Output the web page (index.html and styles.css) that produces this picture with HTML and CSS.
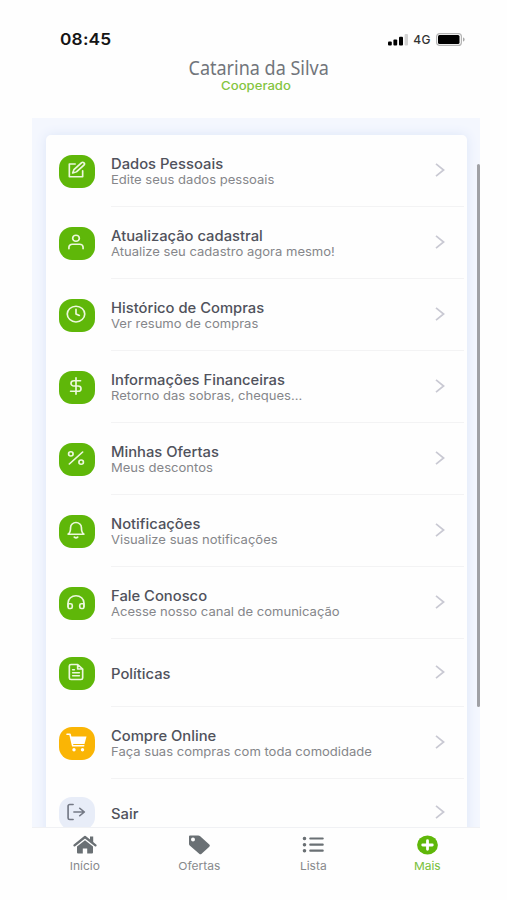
FILE: index.html
```html
<!DOCTYPE html>
<html lang="pt-BR">
<head>
<meta charset="utf-8">
<title>Mais</title>
<link rel="stylesheet" href="styles.css">
</head>
<body>
<div class="phone">
  <header class="status">
    <span class="time">08:45</span>
    <div class="signals">
      <svg class="bars" width="20" height="12" viewBox="0 0 20 12"><rect x="0" y="7.5" width="3.8" height="4" rx="1"/><rect x="5.4" y="5.5" width="3.8" height="6" rx="1"/><rect x="11" y="2.8" width="4" height="8.700" rx="1"/><rect x="16.6" y="0" width="3.4" height="11.5" rx="1" fill="#d2d2d2"/></svg>
      <span class="net">4G</span>
      <svg class="battery" width="29" height="13" viewBox="0 0 29 13"><rect x=".6" y=".6" width="24.8" height="11.8" rx="3" fill="#fff" stroke="#b5b5b5" stroke-width="1.2"/><rect x="2" y="2" width="21.5" height="9" rx="1.5"/><path d="M27 4.5c2.2.8 2.2 3.2 0 4z" fill="#aaa"/></svg>
    </div>
  </header>
  <div class="profile">
    <h1 class="name">Catarina da Silva</h1>
    <p class="role">Cooperado</p>
  </div>
  <main class="content">
    <div class="thumb"></div>
    <ul class="card">
      <li class="row"><span class="badge"><svg class="glyph" viewBox="0 0 24 24" preserveAspectRatio="none"><path d="M11 4H4v17h16v-8"/><path d="M18.500 2.500a2.100 2.100 0 0 1 3 3L12.500 14.500l-4.500 1.500 1.500-4.500z"/></svg></span>
        <div class="body"><div class="text"><b class="title">Dados Pessoais</b><span class="sub">Edite seus dados pessoais</span></div><svg class="chev" viewBox="0 0 10 14"><path d="M1 .8 8.600 7 1 13.200"/></svg></div></li>
      <li class="row"><span class="badge"><svg class="glyph" viewBox="0 0 24 24" preserveAspectRatio="none"><circle cx="12" cy="7" r="4"/><path d="M3.500 21v-2a4 4 0 0 1 4-4h9a4 4 0 0 1 4 4v2"/></svg></span>
        <div class="body"><div class="text"><b class="title">Atualização cadastral</b><span class="sub">Atualize seu cadastro agora mesmo!</span></div><svg class="chev" viewBox="0 0 10 14"><path d="M1 .8 8.600 7 1 13.200"/></svg></div></li>
      <li class="row"><span class="badge"><svg class="glyph" viewBox="0 0 24 24" preserveAspectRatio="none"><circle cx="12" cy="12" r="10.500"/><path d="M12 5.500V12l4 2"/></svg></span>
        <div class="body"><div class="text"><b class="title">Histórico de Compras</b><span class="sub">Ver resumo de compras</span></div><svg class="chev" viewBox="0 0 10 14"><path d="M1 .8 8.600 7 1 13.200"/></svg></div></li>
      <li class="row"><span class="badge"><svg class="glyph" viewBox="0 0 24 24" preserveAspectRatio="none"><path d="M12 1v22M17.500 5H9.500a3.500 3.500 0 0 0 0 7h5a3.500 3.500 0 0 1 0 7H5.500"/></svg></span>
        <div class="body"><div class="text"><b class="title">Informações Financeiras</b><span class="sub">Retorno das sobras, cheques...</span></div><svg class="chev" viewBox="0 0 10 14"><path d="M1 .8 8.600 7 1 13.200"/></svg></div></li>
      <li class="row"><span class="badge"><svg class="glyph" viewBox="0 0 24 24" preserveAspectRatio="none"><path d="M20 4 4 20"/><circle cx="5.800" cy="6.500" r="2.700"/><circle cx="18.200" cy="17.500" r="2.700"/></svg></span>
        <div class="body"><div class="text"><b class="title">Minhas Ofertas</b><span class="sub">Meus descontos</span></div><svg class="chev" viewBox="0 0 10 14"><path d="M1 .8 8.600 7 1 13.200"/></svg></div></li>
      <li class="row"><span class="badge"><svg class="glyph" viewBox="0 0 24 24" preserveAspectRatio="none"><path d="M18.500 8.500a6.500 6.500 0 0 0-13 0c0 7-3 9-3 9h19s-3-2-3-9M14 21.500a2.500 1.800 0 0 1-4 0"/></svg></span>
        <div class="body"><div class="text"><b class="title">Notificações</b><span class="sub">Visualize suas notificações</span></div><svg class="chev" viewBox="0 0 10 14"><path d="M1 .8 8.600 7 1 13.200"/></svg></div></li>
      <li class="row"><span class="badge"><svg class="glyph" viewBox="0 0 24 24" preserveAspectRatio="none"><path d="M2.500 18v-5a9.500 9.500 0 0 1 19 0v5"/><path d="M21.500 18.500a2.300 2.300 0 0 1-2.300 2.300h-.7a2 2 0 0 1-2-2v-2.500a2 2 0 0 1 2-2h3zM2.500 18.500a2.300 2.300 0 0 0 2.300 2.300h.7a2 2 0 0 0 2-2v-2.500a2 2 0 0 0-2-2h-3z"/></svg></span>
        <div class="body"><div class="text"><b class="title">Fale Conosco</b><span class="sub">Acesse nosso canal de comunicação</span></div><svg class="chev" viewBox="0 0 10 14"><path d="M1 .8 8.600 7 1 13.200"/></svg></div></li>
      <li class="row short"><span class="badge"><svg class="glyph" viewBox="0 0 24 24" preserveAspectRatio="none"><path d="M14 2H6a2 2 0 0 0-2 2v16a2 2 0 0 0 2 2h12a2 2 0 0 0 2-2V8zM14 2v6h6M16 13H8M16 17H8M10 9H8"/></svg></span>
        <div class="body"><div class="text"><b class="title">Políticas</b></div><svg class="chev" viewBox="0 0 10 14"><path d="M1 .8 8.600 7 1 13.200"/></svg></div></li>
      <li class="row"><span class="badge shop"><svg class="cart" width="21" height="19" viewBox="0 0 21 19"><path d="M1 1.200h3l2.700 11.600h11" fill="none" stroke="#fff" stroke-width="1.600" stroke-linecap="round" stroke-linejoin="round"/><path d="M4.500 3.500h16l-2 7.500H6.300z"/><circle cx="8" cy="16.800" r="1.700"/><circle cx="16.500" cy="16.800" r="1.700"/></svg></span>
        <div class="body"><div class="text"><b class="title">Compre Online</b><span class="sub">Faça suas compras com toda comodidade</span></div><svg class="chev" viewBox="0 0 10 14"><path d="M1 .8 8.600 7 1 13.200"/></svg></div></li>
      <li class="row short"><span class="badge exit"><svg class="glyph" viewBox="0 0 24 24" preserveAspectRatio="none"><path d="M8.500 2H4.500a2 2 0 0 0-2 2v16a2 2 0 0 0 2 2h4M16.500 17l5.500-5-5.500-5M21.500 12H9.500"/></svg></span>
        <div class="body"><div class="text"><b class="title">Sair</b></div><svg class="chev" viewBox="0 0 10 14"><path d="M1 .8 8.600 7 1 13.200"/></svg></div></li>
    </ul>
  </main>
  <nav class="tabs">
    <a class="tab"><svg width="24" height="20" viewBox="0 0 24 20"><path d="M1.500 10.300 12 2l10.500 8.300" fill="none" stroke="currentColor" stroke-width="2.300" stroke-linecap="round" stroke-linejoin="round"/><path d="M17 1.500h3.200v6.500L17 5.500zM12 5.300l8 6.300v6q0 1-1 1h-4.800v-5.100H9.800v5.100H5q-1 0-1-1v-6z"/></svg><span>Início</span></a>
    <a class="tab"><svg width="24" height="20" viewBox="0 0 24 20"><path fill-rule="evenodd" d="M3 .5h8.200q1 0 1.700.6l9.400 8.400q1.200 1.100 0 2.200l-7.700 7q-1.200 1-2.400 0L2.700 10.500Q2 9.900 2 9V1.500q0-1 1-1zM6 2.600a2 1.900 0 1 0 0 3.800 2 1.900 0 0 0 0-3.800z"/></svg><span>Ofertas</span></a>
    <a class="tab"><svg width="24" height="20" viewBox="0 0 24 20"><path d="M3.400 3.500h.2M3.400 9.700h.2M3.400 15.700h.2" stroke="currentColor" stroke-width="3.400" stroke-linecap="round"/><path d="M9.300 3.500h12.400M9.300 9.700h12.400M9.300 15.700h12.400" stroke="currentColor" stroke-width="2.200" stroke-linecap="round"/></svg><span>Lista</span></a>
    <a class="tab active"><svg width="24" height="20" viewBox="0 0 24 20"><ellipse cx="12.500" cy="10" rx="10.400" ry="9.500"/><path d="M12.500 5.700v8.600M7.700 10h9.600" stroke="#fff" stroke-width="2.800" stroke-linecap="round"/></svg><span>Mais</span></a>
  </nav>
</div>
</body>
</html>
```
FILE: styles.css
```css
* { box-sizing: border-box; }

body {
  margin: 0;
  background: #fefefe;
  font-family: Inter, "Liberation Sans", sans-serif;
}

.phone {
  width: 448px;
  height: 900px;
  margin-left: 32px;
  display: flex;
  flex-direction: column;
  overflow: hidden;
}

.status {
  height: 56px;
  padding: 24px 15px 0 28px;
  display: flex;
  justify-content: space-between;
}

.time {
  font-size: 16px;
  line-height: 31px;
  font-weight: 600;
  letter-spacing: .2px;
  color: #151515;
  transform: scaleX(1.08);
  transform-origin: left;
}

.signals {
  display: flex;
  align-items: center;
  height: 31px;
  gap: 5px;
}

.net {
  font-size: 12px;
  font-weight: 500;
  letter-spacing: .5px;
  color: #333;
}

.profile {
  height: 62px;
  text-align: center;
}

.name {
  margin: 0;
  padding-left: 6px;
  font: 400 20px/23px "Noto Sans", sans-serif;
  color: #71757b;
  transform: scaleX(.9);
}

.role {
  margin: 0;
  font-size: 11.5px;
  line-height: 15px;
  font-weight: 500;
  color: #84c441;
  transform: scaleX(1.14);
}

.content {
  position: relative;
  height: 709px;
  padding: 17px 13px 0 14px;
  background: #f4f7fe;
  overflow: hidden;
}

.thumb {
  position: absolute;
  top: 46px;
  right: 0;
  width: 3px;
  height: 543px;
  border-radius: 2px;
  background: #a0a1a5;
}

.card {
  margin: 0;
  padding: 0;
  height: 740px;
  list-style: none;
  background: #fefefe;
  border-radius: 5px;
  box-shadow: 0 0 12px #dce5f8;
}

.row {
  height: 72px;
  padding-left: 13px;
  display: flex;
  align-items: center;
  gap: 16px;
}

.short { height: 68px; }

.badge {
  width: 36px;
  height: 33px;
  border-radius: 13px;
  display: flex;
  align-items: center;
  justify-content: center;
  padding: 0 2px 2px 0;
  background: #5fb709;
  color: #ecf8dd;
}

.shop { background: #fab505; }
.exit { background: #e8edf8; color: #747985; }

.glyph {
  width: 20px;
  height: 18px;
  fill: none;
  stroke: currentColor;
  stroke-width: 2;
  stroke-linecap: round;
  stroke-linejoin: round;
}

.cart { fill: #fff; }

.body {
  flex: 1;
  height: 100%;
  margin-right: 3px;
  padding-right: 19px;
  display: flex;
  align-items: center;
  justify-content: space-between;
  border-bottom: 1px solid #f3f3f4;
}

.text {
  display: flex;
  flex-direction: column;
  padding-top: 2px;
  white-space: nowrap;
}

.title {
  font-size: 14px;
  line-height: 16px;
  font-weight: 500;
  color: #50525c;
  transform: scaleX(1.055);
  transform-origin: left;
}

.sub {
  font-size: 12px;
  line-height: 16px;
  color: #85868a;
  transform: scaleX(1.086);
  transform-origin: left;
}

.chev {
  width: 10px;
  height: 14px;
  margin-bottom: 2px;
  fill: none;
  stroke: #c9c9d3;
  stroke-width: 1.7;
}

.tabs {
  height: 73px;
  margin: 0 -4px;
  padding-top: 7px;
  display: flex;
  border-top: 1px solid #f0f1f4;
  background: #fefefe;
}

.tab {
  flex: 1;
  display: flex;
  flex-direction: column;
  align-items: center;
  gap: 3px;
  font-size: 11px;
  line-height: 16px;
  color: #87898c;
}

.tab span { transform: scaleX(1.09); }
.tab svg { fill: currentColor; color: #6a7074; }
.active { color: #78c03a; }
.active svg { color: #5fb709; }
```
